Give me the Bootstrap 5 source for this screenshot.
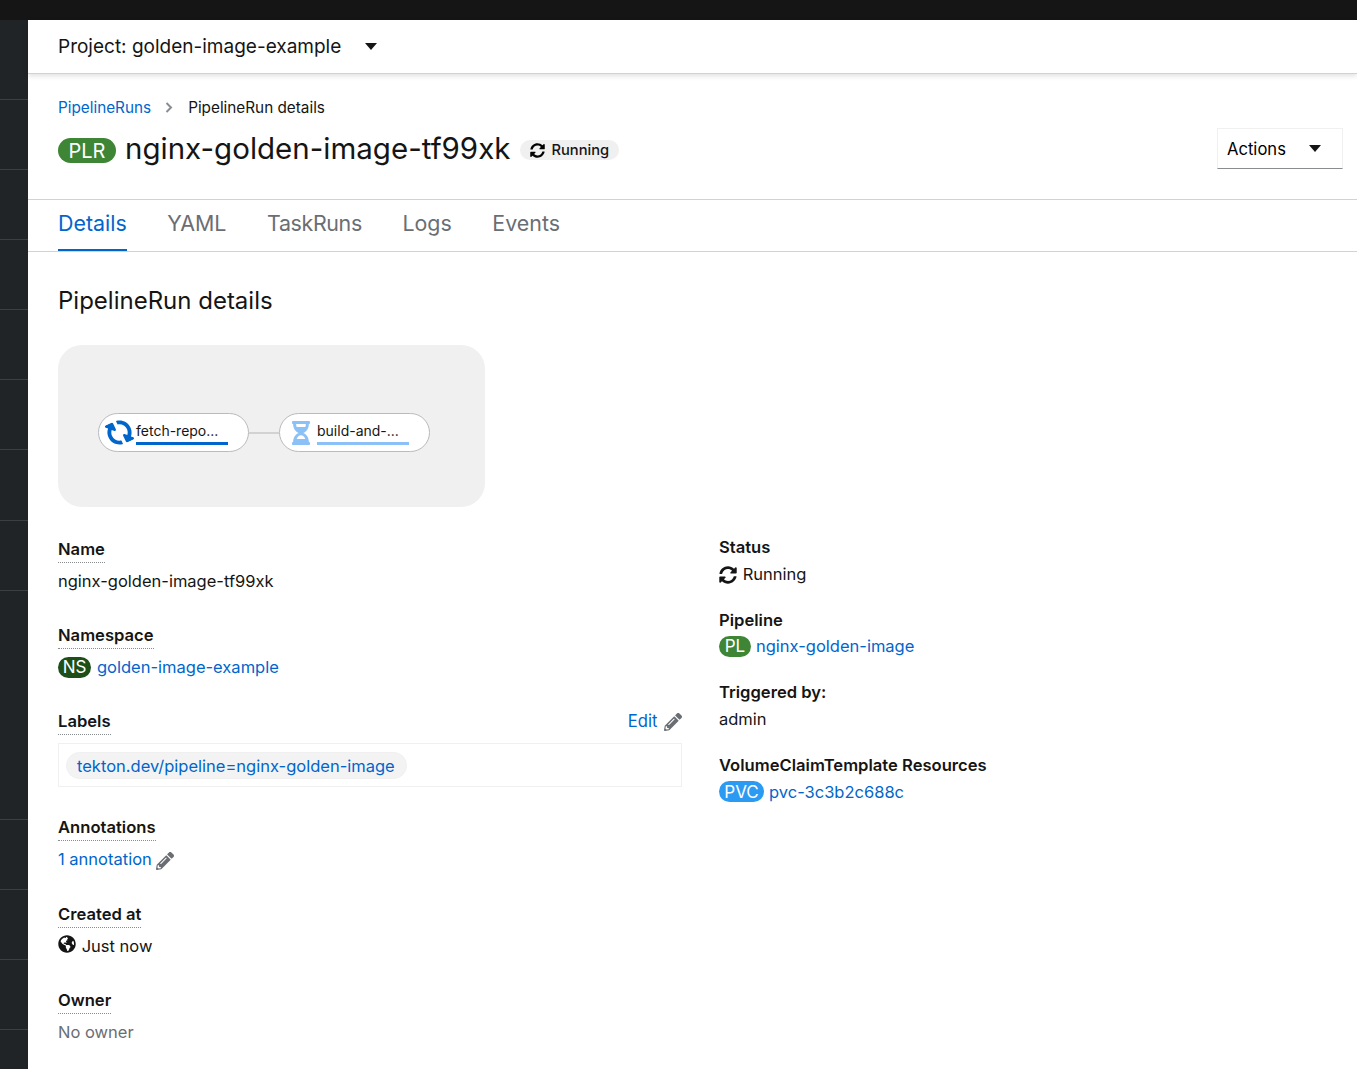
<!DOCTYPE html>
<html lang="en">
<head>
    <meta charset="UTF-8">
    <meta name="viewport" content="width=device-width, initial-scale=1.0">
    <title>PipelineRun details</title>
    <link href="https://cdn.jsdelivr.net/npm/bootstrap@5.3.0/dist/css/bootstrap.min.css" rel="stylesheet">
    <style>
        html, body { height: 100%; overflow: hidden; }
        body { font-family: Inter, "Noto Sans", "Liberation Sans", sans-serif; font-size: 16.5px; line-height: 24px; color: #151515; background: #fff; }
        a { color: #06c; text-decoration: none; }
        .top-strip { height: 20px; background: #151515; }
        .shell { height: 1049px; }
        .side-rail { width: 28px; background: #212427; flex-shrink: 0; }
        .rail-item { height: 70.1px; border-bottom: 1px solid #3c3f42; }
        .rail-item.tall { height: 229px; }
        .rail-item.first { height: 80px; }
        .project-bar { height: 54px; padding-left: 30px; border-bottom: 1px solid #d2d2d2; box-shadow: 0 2px 5px rgba(3,3,3,.12); font-size: 19px; }
        .caret-down { width: 0; height: 0; border-left: 6.5px solid transparent; border-right: 6.5px solid transparent; border-top: 7px solid #151515; }
        .page-head { height: 126px; padding: 22px 14px 0 30px; border-bottom: 1px solid #d2d2d2; }
        .crumbs { font-size: 15.3px; height: 24px; margin-bottom: 0; }
        .crumbs .breadcrumb-item + .breadcrumb-item::before { content: none; }
        .crumbs .breadcrumb-item + .breadcrumb-item { padding-left: 0; }
        .crumb-sep { width: 8px; height: 11px; margin: -2px 15px 0 14px; }
        .title-row { margin-top: 5px; height: 46px; }
        .res-pill { display: inline-flex; align-items: center; justify-content: center; border-radius: 20px; color: #fff; font-weight: 400; }
        .pill-plr { background: #3e8635; width: 58px; height: 25px; font-size: 20px; margin-top: 5px; margin-right: 9px; }
        .page-title { font-size: 29.5px; line-height: 46px; margin: 0; font-weight: 400; }
        .status-chip { background: #f0f0f0; border-radius: 12px; height: 20px; padding: 0 10px; font-size: 14.7px; font-weight: 500; margin-left: 10px; margin-top: 4px; gap: 6px; }
        .actions-btn { width: 126px; height: 41px; margin-top: 1px; border: 1px solid #f0f0f0; border-bottom-color: #8a8d90; font-size: 16.6px; padding: 0 21px 0 9px; background: #fff; }
        .tab-row { height: 52px; padding-left: 30px; border-bottom: 1px solid #d2d2d2; gap: 40.6px; }
        .tab-link { display: block; height: 51px; line-height: 47px; font-size: 21.4px; color: #6a6e73; }
        .tab-link.on { color: #06c; border-bottom: 2px solid #06c; }
        .tab-link.tight { letter-spacing: -.35px; }
        .detail-body { padding: 34px 0 0 30px; }
        .section-title { font-size: 24px; line-height: 30px; margin: 0 0 29px; font-weight: 400; }
        .graph-box { position: relative; width: 427px; height: 162px; background: #f0f0f0; border-radius: 24px; }
        .graph-node { position: absolute; top: 68px; width: 151px; height: 39px; background: #fff; border: 1px solid #b8bbbe; border-radius: 20px; font-size: 14px; }
        .graph-node span { position: absolute; top: 6px; left: 37px; line-height: 21px; }
        .graph-node i { position: absolute; top: 28px; left: 37px; width: 92px; height: 3px; }
        .graph-node svg { position: absolute; }
        .spin-icon { transform: rotate(65deg); }
        .graph-line { position: absolute; left: 191px; top: 87px; width: 30px; height: 2px; background: #d2d2d2; }
        .detail-cols { display: grid; grid-template-columns: 624px 1fr; column-gap: 37px; }
        .fact dt { font-weight: 600; line-height: 24px; margin: 0; font-size: 16.6px; }
        .fact dd { margin: 0; }
        .left-col { padding-top: 30px; }
        .left-col .fact { margin-bottom: 30px; }
        .left-col .fact.boxed { margin-bottom: 28px; }
        .left-col .fact.extra-gap { margin-bottom: 31px; }
        .left-col dt > span { border-bottom: 1px dotted #8a8d90; padding-bottom: 1px; display: inline-block; line-height: 24px; }
        .left-col dd { margin-top: 6px; }
        .right-col { padding-top: 28px; }
        .right-col .fact { height: 72.7px; }
        .right-col dd { margin-top: 2.5px; }
        .pill-ns { background: #1e4f18; width: 33px; height: 21px; font-size: 17px; margin-right: 6px; }
        .pill-pl { background: #3e8635; width: 32px; height: 21px; font-size: 17px; margin-right: 5px; }
        .pill-pvc { background: #2b9af3; width: 45px; height: 21px; font-size: 17px; margin-right: 5px; }
        .left-col dd.label-box { border: 1px solid #f0f0f0; height: 44px; padding: 8px 7px; margin-top: 8px; }
        .label-chip { display: inline-block; background: #f3f3f3; border: 1px solid #f0f0f0; border-radius: 15px; height: 27px; line-height: 26px; padding: 0 11px 0 10px; font-size: 16.5px; }
        .muted-val { color: #6a6e73; }
        .globe-icon { vertical-align: -1px; }
        .lead-icon { margin-right: 1px; }
        .edit-pencil { margin-left: 2px; }
    </style>
</head>
<body>
    <div class="top-strip"></div>
    <div class="shell d-flex">
        <!-- Левая полоса -->
        <div class="side-rail">
            <div class="rail-item first"></div>
            <div class="rail-item"></div><div class="rail-item"></div><div class="rail-item"></div>
            <div class="rail-item"></div><div class="rail-item"></div><div class="rail-item"></div><div class="rail-item"></div>
            <div class="rail-item tall"></div>
            <div class="rail-item"></div><div class="rail-item"></div><div class="rail-item"></div>
        </div>

        <div class="flex-grow-1">
            <div class="project-bar d-flex align-items-center">
                <span>Project: golden-image-example</span>
                <span class="caret-down ms-4"></span>
            </div>

            <div class="page-head">
                <ol class="breadcrumb crumbs align-items-center">
                    <li class="breadcrumb-item"><a href="#">PipelineRuns</a></li>
                    <li class="breadcrumb-item d-flex align-items-center">
                        <svg class="crumb-sep" viewBox="0 0 8 11"><path d="M1.5 1l4.5 4.5L1.5 10" fill="none" stroke="#8a8d90" stroke-width="2"/></svg>
                        PipelineRun details
                    </li>
                </ol>
                <div class="title-row d-flex align-items-center">
                    <span class="res-pill pill-plr">PLR</span>
                    <h1 class="page-title">nginx-golden-image-tf99xk</h1>
                    <span class="status-chip d-inline-flex align-items-center">
                        <svg width="15" height="15" viewBox="0 0 512 512"><use href="#ico-sync"/></svg>
                        Running
                    </span>
                    <button class="actions-btn ms-auto d-flex align-items-center justify-content-between">
                        Actions <span class="caret-down"></span>
                    </button>
                </div>
            </div>

            <nav class="nav tab-row">
                <a class="tab-link on" href="#">Details</a>
                <a class="tab-link" href="#">YAML</a>
                <a class="tab-link tight" href="#">TaskRuns</a>
                <a class="tab-link" href="#">Logs</a>
                <a class="tab-link" href="#">Events</a>
            </nav>

            <div class="detail-body">
                <h2 class="section-title">PipelineRun details</h2>
                <div class="graph-box">
                    <div class="graph-line"></div>
                    <div class="graph-node" style="left:40px">
                        <svg class="spin-icon" style="left:8px;top:6px" width="25" height="25" viewBox="0 0 512 512" fill="#06c"><use href="#ico-sync"/></svg>
                        <span>fetch-repo...</span>
                        <i style="background:#06c"></i>
                    </div>
                    <div class="graph-node" style="left:221px">
                        <svg style="left:12px;top:7px" width="18" height="24" viewBox="0 0 384 512" fill="#8bc1f7"><use href="#ico-hourglass"/></svg>
                        <span>build-and-...</span>
                        <i style="background:#8bc1f7"></i>
                    </div>
                </div>

                <div class="detail-cols">
                    <dl class="left-col m-0">
                        <div class="fact">
                            <dt><span>Name</span></dt>
                            <dd>nginx-golden-image-tf99xk</dd>
                        </div>
                        <div class="fact">
                            <dt><span>Namespace</span></dt>
                            <dd><span class="res-pill pill-ns">NS</span><a href="#">golden-image-example</a></dd>
                        </div>
                        <div class="fact boxed">
                            <dt class="d-flex justify-content-between"><span>Labels</span>
                                <a class="fw-normal" href="#">Edit <svg class="edit-pencil" width="18" height="18" viewBox="0 0 512 512" fill="#6a6e73"><use href="#ico-pencil"/></svg></a>
                            </dt>
                            <dd class="label-box"><a class="label-chip" href="#">tekton.dev/pipeline=nginx-golden-image</a></dd>
                        </div>
                        <div class="fact extra-gap">
                            <dt><span>Annotations</span></dt>
                            <dd><a href="#">1 annotation <svg width="18" height="18" viewBox="0 0 512 512" fill="#6a6e73"><use href="#ico-pencil"/></svg></a></dd>
                        </div>
                        <div class="fact">
                            <dt><span>Created at</span></dt>
                            <dd><svg class="lead-icon globe-icon" width="18" height="18" viewBox="0 0 496 512" fill="#151515"><use href="#ico-globe"/></svg> Just now</dd>
                        </div>
                        <div class="fact">
                            <dt><span>Owner</span></dt>
                            <dd class="muted-val">No owner</dd>
                        </div>
                    </dl>

                    <dl class="right-col m-0">
                        <div class="fact">
                            <dt>Status</dt>
                            <dd><svg class="lead-icon" width="18" height="18" viewBox="0 0 512 512" fill="#151515"><use href="#ico-sync"/></svg> Running</dd>
                        </div>
                        <div class="fact">
                            <dt>Pipeline</dt>
                            <dd><span class="res-pill pill-pl">PL</span><a href="#">nginx-golden-image</a></dd>
                        </div>
                        <div class="fact">
                            <dt>Triggered by:</dt>
                            <dd>admin</dd>
                        </div>
                        <div class="fact">
                            <dt>VolumeClaimTemplate Resources</dt>
                            <dd><span class="res-pill pill-pvc">PVC</span><a href="#">pvc-3c3b2c688c</a></dd>
                        </div>
                    </dl>
                </div>
            </div>
        </div>
    </div>

    <!-- Иконки -->
    <svg width="0" height="0" class="position-absolute">
        <defs>
            <path id="ico-sync" d="M370.72 133.28C339.458 104.008 298.888 87.962 255.848 88c-77.458.068-144.328 53.178-162.791 126.85-1.344 5.363-6.122 9.15-11.651 9.15H24.103c-7.498 0-13.194-6.807-11.807-14.176C33.933 94.924 134.813 8 256 8c66.448 0 126.791 26.136 171.315 68.685L463.03 40.97C478.149 25.851 504 36.559 504 57.941V192c0 13.255-10.745 24-24 24H345.941c-21.382 0-32.09-25.851-16.971-40.971l41.75-41.749zM32 296h134.059c21.382 0 32.09 25.851 16.971 40.971l-41.75 41.75c31.262 29.273 71.835 45.319 114.876 45.28 77.418-.07 144.315-53.144 162.787-126.849 1.344-5.363 6.122-9.15 11.651-9.15h57.304c7.498 0 13.194 6.807 11.807 14.176C478.067 417.076 377.187 504 256 504c-66.448 0-126.791-26.136-171.315-68.685L48.97 471.03C33.851 486.149 8 475.441 8 454.059V320c0-13.255 10.745-24 24-24z"/>
            <path id="ico-pencil" d="M497.9 142.1l-46.1 46.1c-4.7 4.7-12.3 4.7-17 0l-111-111c-4.7-4.7-4.7-12.3 0-17l46.1-46.1c18.7-18.7 49.1-18.7 67.9 0l60.1 60.1c18.8 18.7 18.8 49.1 0 67.9zM284.2 99.8L21.6 362.4.4 483.9c-2.9 16.4 11.4 30.6 27.8 27.8l121.5-21.3 262.6-262.6c4.7-4.7 4.7-12.3 0-17l-111-111c-4.8-4.7-12.4-4.7-17.1 0zM124.1 339.9c-5.5-5.5-5.5-14.3 0-19.8l154-154c5.5-5.5 14.3-5.5 19.8 0s5.5 14.3 0 19.8l-154 154c-5.5 5.5-14.3 5.5-19.8 0zM88 424h48v36.3l-64.5 11.3-31.1-31.1L51.7 376H88v48z"/>
            <path id="ico-hourglass" d="M360 0H24C10.745 0 0 10.745 0 24v16c0 13.255 10.745 24 24 24 0 90.965 51.016 167.734 120.842 192C75.016 280.266 24 357.035 24 448c-13.255 0-24 10.745-24 24v16c0 13.255 10.745 24 24 24h336c13.255 0 24-10.745 24-24v-16c0-13.255-10.745-24-24-24 0-90.965-51.016-167.734-120.842-192C308.984 231.734 360 154.965 360 64c13.255 0 24-10.745 24-24V24c0-13.255-10.745-24-24-24zm-75.078 384H99.08c17.059-46.797 52.096-80 92.92-80 40.821 0 75.862 33.196 92.922 80zm.019-256H99.078C91.988 108.548 88 86.748 88 64h208c0 22.805-3.987 44.587-11.059 64z"/>
            <path id="ico-globe" d="M248 8C111.03 8 0 119.03 0 256s111.03 248 248 248 248-111.03 248-248S384.97 8 248 8zm82.29 357.6c-3.9 3.88-7.99 7.95-11.31 11.28-2.99 3-5.1 6.7-6.17 10.71-1.51 5.66-2.73 11.38-4.77 16.87l-17.39 46.85c-13.76 3-28 4.69-42.65 4.69v-27.38c1.69-12.62-7.64-36.26-22.63-51.25-6-6-9.37-14.14-9.37-22.63v-32.01c0-11.64-6.27-22.34-16.46-27.97-14.37-7.95-34.81-19.06-48.81-26.11-11.48-5.78-22.1-13.14-31.65-21.75l-.8-.72a114.792 114.792 0 0 1-18.06-20.74c-9.38-13.77-24.66-36.42-34.59-51.14 20.47-45.5 57.36-82.04 103.2-101.89l24.01 12.01C203.48 89.74 216 82.01 216 70.11v-11.3c7.99-1.29 16.12-2.11 24.39-2.42l28.3 28.3c6.25 6.25 6.25 16.38 0 22.63L264 112l-10.34 10.34c-3.12 3.12-3.12 8.19 0 11.31l4.69 4.69c3.12 3.12 3.12 8.19 0 11.31l-8 8a8.008 8.008 0 0 1-5.66 2.34h-8.99c-2.08 0-4.08.81-5.58 2.27l-9.92 9.65a8.008 8.008 0 0 0-1.58 9.31l15.59 31.19c2.66 5.32-1.21 11.58-7.15 11.58h-5.64c-1.93 0-3.79-.7-5.24-1.96l-9.28-8.06a16.017 16.017 0 0 0-15.55-3.1l-31.17 10.39a11.95 11.95 0 0 0-8.17 11.34c0 4.53 2.56 8.66 6.61 10.69l11.08 5.54c9.41 4.71 19.79 7.16 30.31 7.16s22.59 27.29 32 32h66.75c8.49 0 16.62 3.37 22.63 9.37l13.69 13.69a30.503 30.503 0 0 1 8.93 21.57 46.536 46.536 0 0 1-13.72 32.98zM417 274.25c-5.79-1.45-10.84-5-14.15-9.97l-17.98-26.97a23.97 23.97 0 0 1 0-26.62l19.59-29.38c2.32-3.47 5.5-6.28 9.24-8.15l12.98-6.49C440.2 193.59 448 223.87 448 256c0 8.67-.74 17.16-1.82 25.54L417 274.25z"/>
        </defs>
    </svg>

    <script src="https://cdn.jsdelivr.net/npm/bootstrap@5.3.0/dist/js/bootstrap.bundle.min.js"></script>
</body>
</html>
